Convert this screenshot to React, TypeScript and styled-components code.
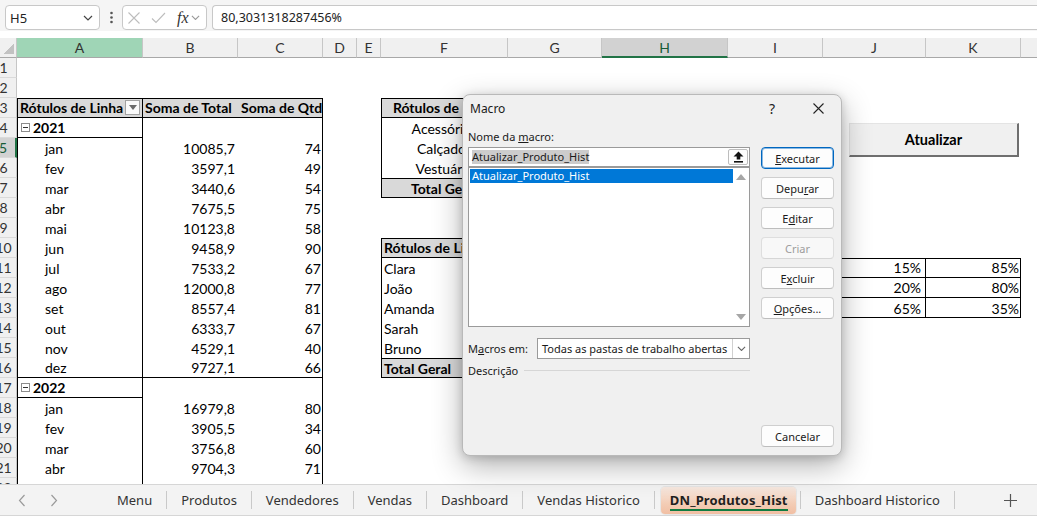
import React from "react";
import styled, { createGlobalStyle } from "styled-components";

const UI = `"Noto Sans", "Open Sans", sans-serif`;
const XL = `Lato, "Open Sans", sans-serif`;

const GlobalStyle = createGlobalStyle`
  *, *::before, *::after { box-sizing: border-box; }
  html, body { margin: 0; padding: 0; background: #fff; }
  body { width: 1037px; height: 522px; overflow: hidden; font-family: ${UI}; }
`;

const Window = styled.div`
  position: relative;
  width: 1037px;
  height: 522px;
  display: flex;
  flex-direction: column;
  overflow: hidden;
  background: #fff;
`;

/* ---------- formula bar ---------- */
const FormulaBar = styled.div`
  height: 31px;
  flex: none;
  display: flex;
  align-items: flex-end;
  padding: 0 0 1px 5px;
  background: #f5f5f5;
`;
const NameBox = styled.div`
  width: 95px;
  height: 25px;
  display: flex;
  align-items: center;
  justify-content: space-between;
  padding: 0 6px 0 4px;
  background: #fff;
  border: 1px solid #c8c8c8;
  border-radius: 4px;
  font-size: 13px;
  color: #222;
`;
const Kebab = styled.div`
  width: 22px;
  height: 25px;
  display: flex;
  align-items: center;
  justify-content: center;
`;
const FxBox = styled.div`
  width: 85px;
  height: 25px;
  display: flex;
  align-items: center;
  padding-left: 4px;
  gap: 10px;
  background: #fff;
  border: 1px solid #c8c8c8;
  border-radius: 4px;
`;
const FxText = styled.span`
  font-family: "Liberation Serif", serif;
  font-style: italic;
  font-size: 16px;
  color: #333;
  margin-left: 1px;
`;
const FxGroup = styled.div`
  display: flex;
  align-items: center;
  gap: 2px;
`;
const FormulaInput = styled.div`
  flex: 1;
  height: 25px;
  margin-left: 5px;
  display: flex;
  align-items: center;
  padding-left: 8px;
  background: #fff;
  border: 1px solid #c8c8c8;
  border-right: none;
  border-radius: 4px 0 0 4px;
  font-size: 12.5px;
  color: #222;
`;

/* ---------- sheet grid ---------- */
const Sheet = styled.div`
  flex: none;
  height: 446px;
  margin-top: 7px;
  display: grid;
  grid-template-columns: 17px 126px 95px 85px 34px 24px 127px 94px 126px 95px 103px 95px 95px;
  grid-auto-rows: 20px;
  overflow: hidden;
  font-family: ${XL};
  font-size: 14px;
  color: #000;
`;
const Corner = styled.div`
  grid-column: 1;
  grid-row: 1;
  background:
    linear-gradient(135deg, transparent 52%, #c2c2c2 52%) no-repeat right 2px bottom 3px / 11px 11px,
    #f0f0f0;
  border-right: 1px solid #c6c6c6;
  border-bottom: 1px solid #a8a8a8;
`;
type HeadState = "none" | "sel" | "mint";
const ColHead = styled.div<{ $c: number; $state: HeadState }>`
  grid-column: ${(p) => p.$c};
  grid-row: 1;
  display: flex;
  align-items: center;
  justify-content: center;
  background: ${(p) => (p.$state === "sel" ? "#d2d2d2" : p.$state === "mint" ? "#9fd5b6" : "#f0f0f0")};
  color: ${(p) => (p.$state === "sel" ? "#185c37" : "#333")};
  border-right: 1px solid #c6c6c6;
  border-bottom: ${(p) => (p.$state === "sel" ? "2px solid #217346" : "1px solid #a8a8a8")};
`;
const RowHead = styled.div<{ $r: number; $sel?: boolean }>`
  grid-column: 1;
  grid-row: ${(p) => p.$r + 1};
  display: flex;
  align-items: center;
  justify-content: center;
  padding-right: 9px;
  overflow: hidden;
  background: ${(p) => (p.$sel ? "#d2d2d2" : "#f0f0f0")};
  color: ${(p) => (p.$sel ? "#185c37" : "#333")};
  border-right: ${(p) => (p.$sel ? "2px solid #217346" : "1px solid #c6c6c6")};
  border-bottom: 1px solid #dadada;
`;

type Align = "l" | "r" | "c";
interface CellProps {
  $c: number;
  $r: number;
  $align?: Align;
  $bold?: boolean;
  $shade?: boolean;
  $bb?: boolean;
  $bt?: boolean;
  $br?: boolean;
  $pl?: number;
  $pr?: number;
}
const Cell = styled.div<CellProps>`
  grid-column: ${(p) => p.$c};
  grid-row: ${(p) => p.$r + 1};
  display: flex;
  align-items: center;
  justify-content: ${(p) => (p.$align === "r" ? "flex-end" : p.$align === "c" ? "center" : "flex-start")};
  padding: 0 ${(p) => p.$pr ?? 3}px 0 ${(p) => p.$pl ?? 3}px;
  font-weight: ${(p) => (p.$bold ? 700 : 400)};
  background: ${(p) => (p.$shade ? "#d9d9d9" : "transparent")};
  border-bottom: ${(p) => (p.$bb ? "1px solid #000" : "none")};
  border-top: ${(p) => (p.$bt ? "1px solid #000" : "none")};
  border-right: ${(p) => (p.$br ? "1px solid #000" : "none")};
  white-space: nowrap;
  overflow: hidden;
`;
const Frame = styled.div<{ $c: number; $cs: number; $r: number; $rs: number }>`
  grid-column: ${(p) => p.$c} / span ${(p) => p.$cs};
  grid-row: ${(p) => p.$r + 1} / span ${(p) => p.$rs};
  border: 1px solid #000;
  pointer-events: none;
`;
const FilterBtn = styled.span`
  margin-left: auto;
  width: 15px;
  height: 15px;
  flex: none;
  display: flex;
  align-items: center;
  justify-content: center;
  background: #fafafa;
  border: 1px solid #a2a2a2;
`;
const Collapse = styled.span`
  width: 9px;
  height: 9px;
  margin-right: 3px;
  display: flex;
  align-items: center;
  justify-content: center;
  background: #fff;
  border: 1px solid #8c8c8c;
  &::after {
    content: "";
    width: 5px;
    height: 1px;
    background: #333;
  }
`;
const ShapeButton = styled.div`
  grid-column: 11 / span 2;
  grid-row: 5 / span 2;
  margin: 5px 2px 1px 26px;
  display: flex;
  align-items: center;
  justify-content: center;
  background: #f0f0f0;
  border-top: 1px solid #e4e4e4;
  border-left: 1px solid #e4e4e4;
  border-right: 2px solid #6f6f6f;
  border-bottom: 2px solid #6f6f6f;
  font-weight: 700;
  font-size: 14.5px;
`;

/* ---------- dialog ---------- */
const Dialog = styled.div`
  position: absolute;
  left: 462px;
  top: 94px;
  width: 380px;
  height: 362px;
  display: flex;
  flex-direction: column;
  background: #f0f0f0;
  border: 1px solid #b9b9b9;
  border-radius: 8px;
  box-shadow: 0 10px 30px rgba(0, 0, 0, 0.3), 0 2px 10px rgba(0, 0, 0, 0.16);
  font-family: ${UI};
  font-size: 11px;
  color: #1a1a1a;
  z-index: 10;
`;
const TitleBar = styled.div`
  height: 29px;
  flex: none;
  display: flex;
  align-items: center;
  padding: 0 0 3px 7px;
  font-size: 12px;
`;
const TitleText = styled.div`
  flex: 1;
`;
const TitleBtn = styled.div`
  width: 46px;
  height: 26px;
  display: flex;
  align-items: center;
  justify-content: center;
  font-size: 14px;
  color: #222;
`;
const Body = styled.div`
  flex: 1;
  display: flex;
  padding: 5px 7px 8px 5px;
`;
const LeftCol = styled.div`
  width: 282px;
  display: flex;
  flex-direction: column;
`;
const RightCol = styled.div`
  width: 73px;
  margin-left: 11px;
  display: flex;
  flex-direction: column;
  gap: 8px;
  padding-top: 18px;
`;
const Label = styled.div`
  height: 16px;
  line-height: 16px;
  margin-bottom: 2px;
  white-space: nowrap;
`;
const NameInput = styled.div`
  height: 20px;
  display: flex;
  align-items: center;
  padding-left: 3px;
  background: #fff;
  border: 1px solid #9a9a9a;
`;
const SelText = styled.span`
  background: #cccccc;
  line-height: 14px;
`;
const UpBtn = styled.span`
  margin-left: auto;
  margin-right: 1px;
  width: 20px;
  height: 16px;
  display: flex;
  align-items: center;
  justify-content: center;
  background: #fdfdfd;
  border: 1px solid #bdbdbd;
  border-radius: 2px;
`;
const ListBox = styled.div`
  height: 160px;
  display: flex;
  background: #fff;
  border: 1px solid #9a9a9a;
`;
const ListItems = styled.div`
  flex: 1;
  padding: 1px 0 0 1px;
`;
const ListItem = styled.div<{ $selected?: boolean }>`
  height: 14px;
  line-height: 14px;
  padding-left: 2px;
  background: ${(p) => (p.$selected ? "#0078d7" : "transparent")};
  color: ${(p) => (p.$selected ? "#fff" : "#1a1a1a")};
`;
const ScrollTrack = styled.div`
  width: 16px;
  display: flex;
  flex-direction: column;
  justify-content: space-between;
  align-items: center;
  padding: 6px 0 6px;
`;
const Arrow = styled.span<{ $down?: boolean }>`
  width: 0;
  height: 0;
  border-left: 5px solid transparent;
  border-right: 5px solid transparent;
  ${(p) => (p.$down ? "border-top: 6px solid #a6a6a6;" : "border-bottom: 6px solid #a6a6a6;")}
`;
const MacrosRow = styled.div`
  margin-top: 11px;
  height: 21px;
  display: flex;
  align-items: center;
`;
const SelectBox = styled.div`
  flex: 1;
  margin-left: 9px;
  height: 21px;
  display: flex;
  align-items: center;
  padding-left: 4px;
  background: #fff;
  border: 1px solid #9a9a9a;
  white-space: nowrap;
`;
const SelectChevron = styled.span`
  margin-left: auto;
  width: 17px;
  height: 100%;
  display: flex;
  align-items: center;
  justify-content: center;
  border-left: 1px solid #d0d0d0;
`;
const DescRow = styled.div`
  margin-top: 3px;
  height: 16px;
  display: flex;
  align-items: center;
`;
const DescLine = styled.div`
  flex: 1;
  margin-left: 6px;
  height: 1px;
  background: #d6d6d6;
`;
const DlgButton = styled.div<{ $primary?: boolean; $disabled?: boolean; $bottom?: boolean }>`
  height: 22px;
  flex: none;
  display: flex;
  align-items: center;
  justify-content: center;
  margin-top: ${(p) => (p.$bottom ? "auto" : "0")};
  background: ${(p) => (p.$disabled ? "#f8f8f8" : "#fdfdfd")};
  border: 1px solid ${(p) => (p.$primary ? "#0067c0" : p.$disabled ? "#dedede" : "#cfcfcf")};
  border-bottom-color: ${(p) => (p.$primary ? "#0067c0" : p.$disabled ? "#d6d6d6" : "#bdbdbd")};
  box-shadow: ${(p) => (p.$primary ? "inset 0 0 0 1px rgba(0,103,192,0.45)" : "none")};
  border-radius: 4px;
  color: ${(p) => (p.$disabled ? "#9d9d9d" : "#1a1a1a")};
`;

/* ---------- sheet tabs ---------- */
const TabBar = styled.div`
  height: 31px;
  flex: none;
  display: flex;
  align-items: center;
  background: #f3f3f3;
  border-top: 1px solid #d6d6d6;
  font-family: ${UI};
  font-size: 13px;
  color: #333;
`;
const Nav = styled.div`
  width: 103px;
  height: 100%;
  flex: none;
  display: flex;
  align-items: center;
  padding-left: 18px;
  gap: 24px;
`;
const Tab = styled.div<{ $active?: boolean }>`
  height: 27px;
  display: flex;
  align-items: center;
  white-space: nowrap;
  padding: ${(p) => (p.$active ? "0 8px 0 9px" : "0 14px")};
  margin: ${(p) => (p.$active ? "0 4px 0 6px" : "0")};
  border-radius: 4px;
  background: ${(p) => (p.$active ? "linear-gradient(180deg, #f7e9e1 0%, #f3cdb6 60%, #f1bfa3 100%)" : "transparent")};
  box-shadow: ${(p) => (p.$active ? "0 0 0 1px rgba(0,0,0,0.05)" : "none")};
  font-weight: ${(p) => (p.$active ? 700 : 400)};
  color: ${(p) => (p.$active ? "#1f1f1f" : "#333")};
  letter-spacing: ${(p) => (p.$active ? "0.15px" : "0")};
`;
const TabLabel = styled.span<{ $active?: boolean }>`
  padding-top: 2px;
  border-bottom: 2px solid ${(p) => (p.$active ? "#107c41" : "transparent")};
  line-height: 17px;
`;
const Sep = styled.div`
  width: 1px;
  height: 18px;
  flex: none;
  background: #c9c9c9;
`;
const Plus = styled.div`
  margin-left: auto;
  margin-right: 7px;
  width: 40px;
  height: 100%;
  display: flex;
  align-items: center;
  justify-content: center;
`;
const StatusStrip = styled.div`
  height: 7px;
  flex: none;
  background: #fff;
  border-top: 1px solid #d6d6d6;
`;

/* ---------- data ---------- */
const COLS = ["A", "B", "C", "D", "E", "F", "G", "H", "I", "J", "K", "L"];
const y2021: [string, string, number][] = [
  ["jan", "10085,7", 74],
  ["fev", "3597,1", 49],
  ["mar", "3440,6", 54],
  ["abr", "7675,5", 75],
  ["mai", "10123,8", 58],
  ["jun", "9458,9", 90],
  ["jul", "7533,2", 67],
  ["ago", "12000,8", 77],
  ["set", "8557,4", 81],
  ["out", "6333,7", 67],
  ["nov", "4529,1", 40],
  ["dez", "9727,1", 66],
];
const y2022: [string, string, number][] = [
  ["jan", "16979,8", 80],
  ["fev", "3905,5", 34],
  ["mar", "3756,8", 60],
  ["abr", "9704,3", 71],
  ["mai", "10531,7", 59],
];
const categories = ["Acessórios", "Calçados", "Vestuário"];
const sellers = ["Clara", "João", "Amanda", "Sarah", "Bruno"];
const pct: [string, string][] = [
  ["15%", "85%"],
  ["20%", "80%"],
  ["65%", "35%"],
];

const Chevron = ({ size = 10, color = "#444" }: { size?: number; color?: string }) => (
  <svg width={size} height={size * 0.6} viewBox="0 0 10 6">
    <path d="M1 1 L5 5 L9 1" fill="none" stroke={color} strokeWidth="1.2" />
  </svg>
);

function MonthRows({ start, rows, lastBorder }: { start: number; rows: [string, string, number][]; lastBorder?: boolean }) {
  return (
    <>
      {rows.map(([m, t, q], i) => {
        const r = start + i;
        const bb = lastBorder && i === rows.length - 1;
        return (
          <React.Fragment key={r}>
            <Cell $c={2} $r={r} $pl={28} $br $bb={bb}>
              {m}
            </Cell>
            <Cell $c={3} $r={r} $align="r" $bb={bb}>
              {t}
            </Cell>
            <Cell $c={4} $r={r} $align="r" $pr={2} $bb={bb}>
              {q}
            </Cell>
          </React.Fragment>
        );
      })}
    </>
  );
}

export default function App() {
  const rowNums = Array.from({ length: 22 }, (_, i) => i + 1);
  return (
    <Window>
      <GlobalStyle />
      <FormulaBar>
        <NameBox>
          H5
          <Chevron size={10} color="#444" />
        </NameBox>
        <Kebab>
          <svg width="3" height="13" viewBox="0 0 3 13">
            <circle cx="1.5" cy="2" r="1.3" fill="#555" />
            <circle cx="1.5" cy="6.5" r="1.3" fill="#555" />
            <circle cx="1.5" cy="11" r="1.3" fill="#555" />
          </svg>
        </Kebab>
        <FxBox>
          <svg width="14" height="14" viewBox="0 0 14 14">
            <path d="M1.5 1.5 L12.5 12.5 M12.5 1.5 L1.5 12.5" stroke="#bdbdbd" strokeWidth="1.1" />
          </svg>
          <svg width="15" height="14" viewBox="0 0 15 14">
            <path d="M1 7.5 L5 11.5 L14 2" fill="none" stroke="#bdbdbd" strokeWidth="1.1" />
          </svg>
          <FxGroup>
            <FxText>fx</FxText>
            <Chevron size={9} color="#999" />
          </FxGroup>
        </FxBox>
        <FormulaInput>80,3031318287456%</FormulaInput>
      </FormulaBar>

      <Sheet>
        <Corner />
        {COLS.map((l, i) => (
          <ColHead key={l} $c={i + 2} $state={l === "H" ? "sel" : l === "A" ? "mint" : "none"}>
            {l}
          </ColHead>
        ))}
        {rowNums.map((n) => (
          <RowHead key={n} $r={n} $sel={n === 5}>
            {n}
          </RowHead>
        ))}

        {/* Left pivot table */}
        <Cell $c={2} $r={3} $shade $bold $bb $br $pr={2}>
          Rótulos de Linha
          <FilterBtn>
            <svg width="8" height="5" viewBox="0 0 8 5">
              <path d="M0 0 H8 L4 5 Z" fill="#6b6b6b" />
            </svg>
          </FilterBtn>
        </Cell>
        <Cell $c={3} $r={3} $shade $bold $bb $pl={2}>
          Soma de Total
        </Cell>
        <Cell $c={4} $r={3} $shade $bold $bb $pl={3}>
          Soma de Qtd
        </Cell>
        <Cell $c={2} $r={4} $bold $bb $br $pl={4}>
          <Collapse />
          2021
        </Cell>
        <MonthRows start={5} rows={y2021} lastBorder />
        <Cell $c={2} $r={17} $bold $bb $br $pl={4}>
          <Collapse />
          2022
        </Cell>
        <MonthRows start={18} rows={y2022} />
        <Frame $c={2} $cs={3} $r={3} $rs={21} />

        {/* Category pivot */}
        <Cell $c={7} $r={3} $shade $bold $bb $align="c">
          Rótulos de Linha
        </Cell>
        <Cell $c={8} $r={3} $shade $bold $bb $align="r">
          Soma de Total
        </Cell>
        {categories.map((c, i) => (
          <Cell key={c} $c={7} $r={4 + i} $align="c">
            {c}
          </Cell>
        ))}
        <Cell $c={7} $r={7} $shade $bold $bt $align="c">
          Total Geral
        </Cell>
        <Cell $c={8} $r={7} $shade $bold $bt />
        <Frame $c={7} $cs={2} $r={3} $rs={5} />

        {/* Sellers pivot */}
        <Cell $c={7} $r={10} $shade $bold $bb>
          Rótulos de Linha
        </Cell>
        <Cell $c={8} $r={10} $shade $bold $bb />
        {sellers.map((s, i) => (
          <Cell key={s} $c={7} $r={11 + i}>
            {s}
          </Cell>
        ))}
        <Cell $c={7} $r={16} $shade $bold $bt>
          Total Geral
        </Cell>
        <Cell $c={8} $r={16} $shade $bold $bt />
        <Frame $c={7} $cs={2} $r={10} $rs={7} />

        {/* Percent table */}
        {pct.map(([a, b], i) => (
          <React.Fragment key={i}>
            <Cell $c={11} $r={11 + i} $align="r" $pr={4} $br $bb={i < 2}>
              {a}
            </Cell>
            <Cell $c={12} $r={11 + i} $align="r" $pr={2} $bb={i < 2}>
              {b}
            </Cell>
          </React.Fragment>
        ))}
        <Frame $c={11} $cs={2} $r={11} $rs={3} />

        <ShapeButton>Atualizar</ShapeButton>
      </Sheet>

      <TabBar>
        <Nav>
          <svg width="8" height="13" viewBox="0 0 8 13">
            <path d="M6.5 1 L1.5 6.5 L6.5 12" fill="none" stroke="#9a9a9a" strokeWidth="1.2" />
          </svg>
          <svg width="8" height="13" viewBox="0 0 8 13">
            <path d="M1.5 1 L6.5 6.5 L1.5 12" fill="none" stroke="#9a9a9a" strokeWidth="1.2" />
          </svg>
        </Nav>
        <Tab>Menu</Tab>
        <Sep />
        <Tab>Produtos</Tab>
        <Sep />
        <Tab>Vendedores</Tab>
        <Sep />
        <Tab>Vendas</Tab>
        <Sep />
        <Tab>Dashboard</Tab>
        <Sep />
        <Tab>Vendas Historico</Tab>
        <Sep />
        <Tab $active>
          <TabLabel $active>DN_Produtos_Hist</TabLabel>
        </Tab>
        <Sep />
        <Tab>Dashboard Historico</Tab>
        <Sep />
        <Plus>
          <svg width="15" height="15" viewBox="0 0 15 15">
            <path d="M7.5 1 V14 M1 7.5 H14" stroke="#555" strokeWidth="1.2" />
          </svg>
        </Plus>
      </TabBar>
      <StatusStrip />

      <Dialog>
        <TitleBar>
          <TitleText>Macro</TitleText>
          <TitleBtn>?</TitleBtn>
          <TitleBtn>
            <svg width="11" height="11" viewBox="0 0 11 11">
              <path d="M0.5 0.5 L10.5 10.5 M10.5 0.5 L0.5 10.5" stroke="#222" strokeWidth="1.1" />
            </svg>
          </TitleBtn>
        </TitleBar>
        <Body>
          <LeftCol>
            <Label>
              Nome da <u>m</u>acro:
            </Label>
            <NameInput>
              <SelText>Atualizar_Produto_Hist</SelText>
              <UpBtn>
                <svg width="11" height="12" viewBox="0 0 11 12">
                  <path d="M5.5 0.5 L10.5 5.5 H7.3 V8.5 H3.7 V5.5 H0.5 Z" fill="#111" />
                  <rect x="1" y="10" width="9" height="1.6" fill="#111" />
                </svg>
              </UpBtn>
            </NameInput>
            <ListBox>
              <ListItems>
                <ListItem $selected>Atualizar_Produto_Hist</ListItem>
              </ListItems>
              <ScrollTrack>
                <Arrow />
                <Arrow $down />
              </ScrollTrack>
            </ListBox>
            <MacrosRow>
              <span>
                M<u>a</u>cros em:
              </span>
              <SelectBox>
                Todas as pastas de trabalho abertas
                <SelectChevron>
                  <Chevron size={9} color="#666" />
                </SelectChevron>
              </SelectBox>
            </MacrosRow>
            <DescRow>
              Descrição
              <DescLine />
            </DescRow>
          </LeftCol>
          <RightCol>
            <DlgButton $primary>
              <span>
                <u>E</u>xecutar
              </span>
            </DlgButton>
            <DlgButton>
              <span>
                Depu<u>r</u>ar
              </span>
            </DlgButton>
            <DlgButton>
              <span>
                E<u>d</u>itar
              </span>
            </DlgButton>
            <DlgButton $disabled>Criar</DlgButton>
            <DlgButton>
              <span>
                E<u>x</u>cluir
              </span>
            </DlgButton>
            <DlgButton>
              <span>
                <u>O</u>pções...
              </span>
            </DlgButton>
            <DlgButton $bottom>Cancelar</DlgButton>
          </RightCol>
        </Body>
      </Dialog>
    </Window>
  );
}
